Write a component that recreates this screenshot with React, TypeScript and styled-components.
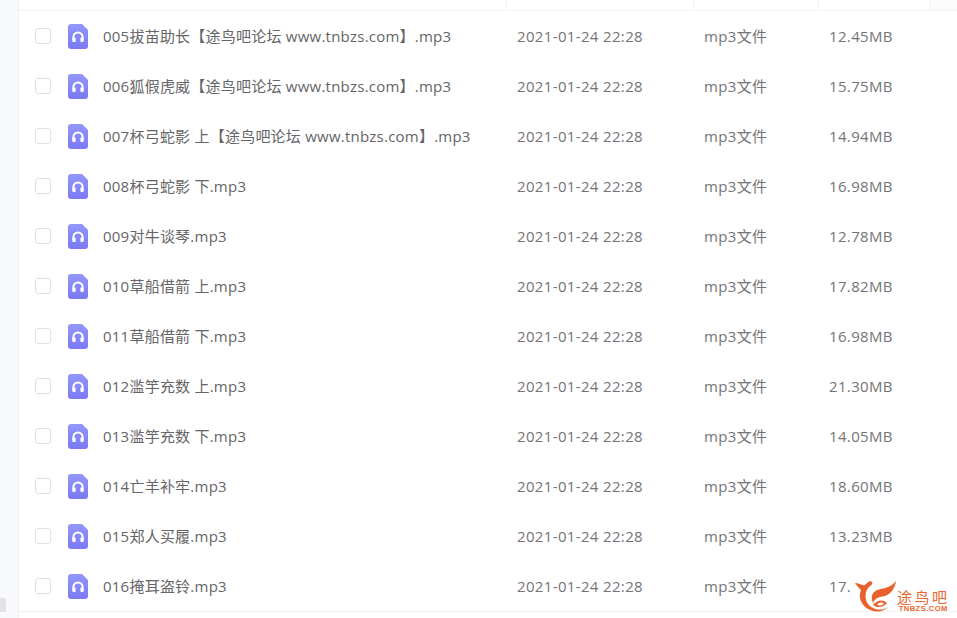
import React from "react";
import styled, { createGlobalStyle } from "styled-components";

const Global = createGlobalStyle`
  html, body { margin: 0; padding: 0; background: #fff; }
  body { font-family: "Open Sans", "Noto Sans CJK SC", sans-serif; overflow: hidden; }
`;

const Page = styled.div`
  position: relative;
  width: 957px;
  height: 618px;
  display: flex;
  overflow: hidden;
`;

const Sidebar = styled.aside`
  width: 18px;
  flex: none;
  background: #f8f9fb;
  border-right: 1px solid #f0f1f3;
  display: flex;
  flex-direction: column;
  justify-content: flex-end;
`;

const SideThumb = styled.div`
  width: 6px;
  height: 14px;
  margin-bottom: 6px;
  background: #e3e3e5;
`;

const Main = styled.main`
  flex: 1;
  min-width: 0;
  display: flex;
  flex-direction: column;
`;

const Header = styled.div`
  height: 10px;
  flex: none;
  display: grid;
  grid-template-columns: 488px 187px 125px 112px 1fr;
  border-bottom: 1px solid #f3f3f5;
`;

const HeaderCell = styled.div`
  border-right: 1px solid #f0f0f2;
  &:last-child { border-right: 0; background: #fcfcfd; }
`;

const Body = styled.div`
  display: flex;
  flex-direction: column;
  border-bottom: 1px solid #f1f1f3;
`;

const Row = styled.div`
  height: 50px;
  display: grid;
  grid-template-columns: 487px 187px 125px 1fr;
  align-items: center;
  color: #747476;
  font-size: 15px;
  letter-spacing: 0.35px;
`;

const NameCell = styled.div`
  display: flex;
  align-items: center;
  padding-left: 16px;
  white-space: nowrap;
`;

const Box = styled.span`
  width: 14px;
  height: 14px;
  flex: none;
  border: 1px solid #e0e0e2;
  border-radius: 3px;
  background: #fff;
`;

const FileIcon = styled.svg`
  width: 20px;
  height: 25px;
  flex: none;
  margin-left: 17px;
  margin-right: 15px;
`;

const Name = styled.span`
  color: #656567;
  letter-spacing: 0.23px;
  padding-bottom: 2px;
`;

const Cell = styled.div<{ $lift?: boolean }>`
  padding-left: 11px;
  white-space: nowrap;
  padding-bottom: ${(p) => (p.$lift ? 2 : 0)}px;
`;

const Logo = styled.div`
  position: absolute;
  left: 855px;
  top: 580px;
  width: 96px;
  height: 32px;
  display: flex;
  align-items: flex-end;
`;

const LogoMark = styled.svg`
  width: 42px;
  height: 32px;
  flex: none;
`;

const LogoText = styled.div`
  display: flex;
  flex-direction: column;
  align-items: center;
  color: #e8672f;
`;

const LogoCn = styled.span`
  font-size: 15px;
  line-height: 15px;
  letter-spacing: 2.5px;
`;

const LogoEn = styled.span`
  font-size: 7.5px;
  line-height: 7px;
  font-weight: 700;
  letter-spacing: 0.5px;
  font-family: "Liberation Sans", sans-serif;
`;

const rows: [string, string][] = [
  ["005拔苗助长【途鸟吧论坛 www.tnbzs.com】.mp3", "12.45MB"],
  ["006狐假虎威【途鸟吧论坛 www.tnbzs.com】.mp3", "15.75MB"],
  ["007杯弓蛇影 上【途鸟吧论坛 www.tnbzs.com】.mp3", "14.94MB"],
  ["008杯弓蛇影 下.mp3", "16.98MB"],
  ["009对牛谈琴.mp3", "12.78MB"],
  ["010草船借箭 上.mp3", "17.82MB"],
  ["011草船借箭 下.mp3", "16.98MB"],
  ["012滥竽充数 上.mp3", "21.30MB"],
  ["013滥竽充数 下.mp3", "14.05MB"],
  ["014亡羊补牢.mp3", "18.60MB"],
  ["015郑人买履.mp3", "13.23MB"],
  ["016掩耳盗铃.mp3", "17."],
];

const AudioIcon = ({ id }: { id: number }) => (
  <FileIcon viewBox="0 0 20 25">
    <defs>
      <linearGradient id={`g${id}`} x1="0" y1="0" x2="0" y2="1">
        <stop offset="0" stopColor="#9397fa" />
        <stop offset="1" stopColor="#7a7af5" />
      </linearGradient>
    </defs>
    <path d="M3 0H14L20 6V22a3 3 0 0 1-3 3H3a3 3 0 0 1-3-3V3a3 3 0 0 1 3-3Z" fill={`url(#g${id})`} />
    <path d="M5.4 16.5V13a4.6 4.6 0 0 1 9.2 0v3.5" fill="none" stroke="#fff" strokeWidth="2" />
    <rect x="4.4" y="13.4" width="3.2" height="4.6" rx="1" fill="#fff" />
    <rect x="12.4" y="13.4" width="3.2" height="4.6" rx="1" fill="#fff" />
  </FileIcon>
);

export default function App() {
  return (
    <Page>
      <Global />
      <Sidebar>
        <SideThumb />
      </Sidebar>
      <Main>
        <Header>
          <HeaderCell />
          <HeaderCell />
          <HeaderCell />
          <HeaderCell />
          <HeaderCell />
        </Header>
        <Body>
          {rows.map(([name, size], i) => (
            <Row key={name}>
              <NameCell>
                <Box />
                <AudioIcon id={i} />
                <Name>{name}</Name>
              </NameCell>
              <Cell>2021-01-24 22:28</Cell>
              <Cell $lift>mp3文件</Cell>
              <Cell>{size}</Cell>
            </Row>
          ))}
        </Body>
      </Main>
      <Logo>
        <LogoMark viewBox="0 0 42 32">
          <path d="M0 3C4 3 7 6 10 5C12 3 15 0 17 2C18 3 17 5 15 6C10 10 9 18 13 24C17 29 26 32 33 27C29 32 20 33 13 29C6 25 3 17 6 10C4 8 2 6 0 3Z" fill="#e8602c" />
          <path d="M41 1C40 8 36 14 30 16C24 17 20 18 18 23C14 14 20 10 26 9C32 8 37 6 41 1Z" fill="#e8602c" />
          <path d="M18 25C22 28 28 28 32 23C28 19 22 20 18 25ZM22 24.5C25 22 27 22 29 23.5C26 26 24 26 22 24.5Z" fill="#e8602c" fillRule="evenodd" />
        </LogoMark>
        <LogoText>
          <LogoCn>途鸟吧</LogoCn>
          <LogoEn>TNBZS.COM</LogoEn>
        </LogoText>
      </Logo>
    </Page>
  );
}
